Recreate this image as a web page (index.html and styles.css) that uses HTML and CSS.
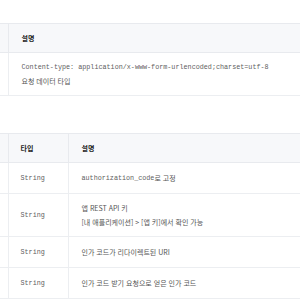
FILE: index.html
```html
<!DOCTYPE html>
<html lang="ko">
<head>
<meta charset="utf-8">
<title>인가 코드 요청</title>
<link rel="stylesheet" href="styles.css">
</head>
<body>
<div class="doc">
  <table class="spec header-spec">
    <colgroup>
      <col class="col-name">
      <col>
    </colgroup>
    <thead>
      <tr><th></th><th>설명</th></tr>
    </thead>
    <tbody>
      <tr>
        <td></td>
        <td><code>Content-type: application/x-www-form-urlencoded;charset=utf-8</code><br>요청 데이터 타입</td>
      </tr>
    </tbody>
  </table>

  <table class="spec param-spec">
    <colgroup>
      <col class="col-name">
      <col class="col-type">
      <col>
    </colgroup>
    <thead>
      <tr><th></th><th>타입</th><th>설명</th></tr>
    </thead>
    <tbody>
      <tr>
        <td></td>
        <td><code>String</code></td>
        <td><code>authorization_code</code>로 고정</td>
      </tr>
      <tr>
        <td></td>
        <td><code>String</code></td>
        <td>앱 REST API 키<br>[내 애플리케이션] &gt; [앱 키]에서 확인 가능</td>
      </tr>
      <tr>
        <td></td>
        <td><code>String</code></td>
        <td>인가 코드가 리다이렉트된 URI</td>
      </tr>
      <tr>
        <td></td>
        <td><code>String</code></td>
        <td>인가 코드 받기 요청으로 얻은 인가 코드</td>
      </tr>
    </tbody>
  </table>
</div>
</body>
</html>
```

FILE: styles.css
```css
html, body {
  margin: 0;
  padding: 0;
  background: #ffffff;
}

.doc {
  width: 300px;
  height: 300px;
  overflow: hidden;
  padding-top: 23px;
  box-sizing: border-box;
  font-family: "Noto Sans CJK KR", "Noto Sans", sans-serif;
  font-size: 7px;
  line-height: 14px;
  color: #555555;
}

.spec {
  width: 320px;
  border-collapse: collapse;
  table-layout: fixed;
}

.spec .col-name {
  width: 8px;
}

.spec .col-type {
  width: 60px;
}

.param-spec {
  margin-top: 37px;
}

.spec th,
.spec td {
  box-sizing: border-box;
  text-align: left;
  vertical-align: middle;
  padding: 7px 12px;
  border: 1px solid #eceef1;
  white-space: nowrap;
}

.spec th:first-child,
.spec td:first-child {
  padding: 0;
  border-left: none;
}

.spec th {
  height: 29px;
  padding-top: 6px;
  padding-bottom: 6px;
  background: #f7f8fa;
  color: #1f1f1f;
  font-weight: 700;
  border-color: #e8eaee;
}

.spec td {
  height: 31px;
}

.spec th:last-child,
.spec td:last-child {
  padding-left: 13px;
}

code {
  font-family: "Liberation Mono", "DejaVu Sans Mono", monospace;
  font-size: 6.75px;
  line-height: 14px;
  vertical-align: top;
  color: #606060;
}
```
